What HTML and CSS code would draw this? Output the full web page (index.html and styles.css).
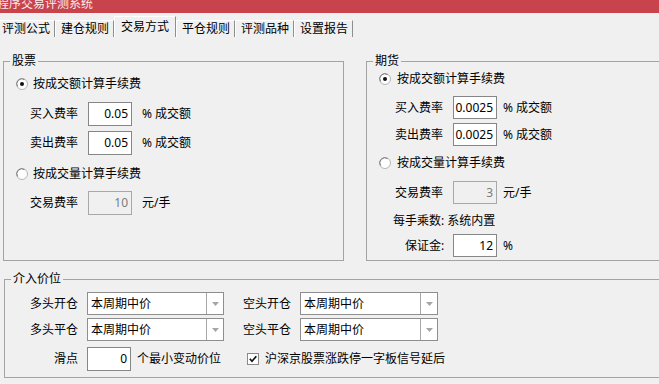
FILE: index.html
```html
<!DOCTYPE html>
<html lang="zh-CN">
<head>
<meta charset="utf-8">
<title>程序交易评测系统</title>
<link rel="stylesheet" href="styles.css">
</head>
<body>
<div class="titlebar"><span>程序交易评测系统</span></div>
<div class="tabs">
  <div class="tab">评测公式</div>
  <div class="tab">建仓规则</div>
  <div class="tab active">交易方式</div>
  <div class="tab">平仓规则</div>
  <div class="tab">评测品种</div>
  <div class="tab">设置报告</div>
</div>

<div class="panes">
  <fieldset class="group stock">
    <legend>股票</legend>
    <div class="body stock-body">
      <div class="opt">
        <svg class="radio" width="12" height="12" viewBox="0 0 12 12"><circle cx="6" cy="6" r="5.5" fill="#fff" stroke="#b4b4b4"/><path d="M1.6 8.5 A5 5 0 0 1 8.5 1.6" fill="none" stroke="#7a7a7a"/><circle cx="6" cy="6" r="2" fill="#111"/></svg>
        <span>按成交额计算手续费</span>
      </div>
      <div class="field f-s m8">
        <span class="lbl">买入费率</span>
        <div class="inp">0.05</div>
        <span class="unit u10">% 成交额</span>
      </div>
      <div class="field f-s m5">
        <span class="lbl">卖出费率</span>
        <div class="inp">0.05</div>
        <span class="unit u10">% 成交额</span>
      </div>
      <div class="opt m9">
        <svg class="radio" width="12" height="12" viewBox="0 0 12 12"><circle cx="6" cy="6" r="5.5" fill="#fff" stroke="#b4b4b4"/><path d="M1.6 8.5 A5 5 0 0 1 8.5 1.6" fill="none" stroke="#7a7a7a"/></svg>
        <span>按成交量计算手续费</span>
      </div>
      <div class="field f-s m7">
        <span class="lbl">交易费率</span>
        <div class="inp disabled">10</div>
        <span class="unit u10">元/手</span>
      </div>
    </div>
  </fieldset>

  <fieldset class="group futures">
    <legend>期货</legend>
    <div class="body fut-body">
      <div class="opt wide">
        <svg class="radio" width="12" height="12" viewBox="0 0 12 12"><circle cx="6" cy="6" r="5.5" fill="#fff" stroke="#b4b4b4"/><path d="M1.6 8.5 A5 5 0 0 1 8.5 1.6" fill="none" stroke="#7a7a7a"/><circle cx="6" cy="6" r="2" fill="#111"/></svg>
        <span>按成交额计算手续费</span>
      </div>
      <div class="field f-f m7">
        <span class="lbl">买入费率</span>
        <div class="inp">0.0025</div>
        <span class="unit u6">% 成交额</span>
      </div>
      <div class="field f-f m4">
        <span class="lbl">卖出费率</span>
        <div class="inp">0.0025</div>
        <span class="unit u6">% 成交额</span>
      </div>
      <div class="opt wide m7">
        <svg class="radio" width="12" height="12" viewBox="0 0 12 12"><circle cx="6" cy="6" r="5.5" fill="#fff" stroke="#b4b4b4"/><path d="M1.6 8.5 A5 5 0 0 1 8.5 1.6" fill="none" stroke="#7a7a7a"/></svg>
        <span>按成交量计算手续费</span>
      </div>
      <div class="field f-f m8">
        <span class="lbl">交易费率</span>
        <div class="inp disabled">3</div>
        <span class="unit u6">元/手</span>
      </div>
      <div class="info m9">每手乘数: 系统内置</div>
      <div class="field f-f m5">
        <span class="lbl indent">保证金:</span>
        <div class="inp">12</div>
        <span class="unit u6">%</span>
      </div>
    </div>
  </fieldset>
</div>

<fieldset class="group price">
  <legend>介入价位</legend>
  <div class="body price-body">
    <div class="prow m5">
      <span class="plbl">多头开仓</span>
      <div class="select s1"><span class="val">本周期中价</span><span class="btn"><svg width="7" height="4" viewBox="0 0 7 4"><polygon points="0,0 7,0 3.5,4" fill="#a6a6a6"/></svg></span></div>
      <span class="plbl2">空头开仓</span>
      <div class="select s2"><span class="val">本周期中价</span><span class="btn"><svg width="7" height="4" viewBox="0 0 7 4"><polygon points="0,0 7,0 3.5,4" fill="#a6a6a6"/></svg></span></div>
    </div>
    <div class="prow m3">
      <span class="plbl">多头平仓</span>
      <div class="select s1"><span class="val">本周期中价</span><span class="btn"><svg width="7" height="4" viewBox="0 0 7 4"><polygon points="0,0 7,0 3.5,4" fill="#a6a6a6"/></svg></span></div>
      <span class="plbl2">空头平仓</span>
      <div class="select s2"><span class="val">本周期中价</span><span class="btn"><svg width="7" height="4" viewBox="0 0 7 4"><polygon points="0,0 7,0 3.5,4" fill="#a6a6a6"/></svg></span></div>
    </div>
    <div class="prow tall m6">
      <span class="plbl">滑点</span>
      <div class="inp">0</div>
      <span class="unit u6">个最小变动价位</span>
      <svg class="check" width="12" height="12" viewBox="0 0 12 12"><rect x="0.5" y="0.5" width="11" height="11" fill="#fff" stroke="#8a8a8a"/><path d="M2.8 5.8 L5 8.3 L9.3 3.2" fill="none" stroke="#111" stroke-width="1.7"/></svg>
      <span class="chk-lbl">沪深京股票涨跌停一字板信号延后</span>
    </div>
  </div>
</fieldset>
</body>
</html>
```

FILE: styles.css
```css
html, body {
  margin: 0;
  padding: 0;
}
body {
  width: 659px;
  height: 384px;
  overflow: hidden;
  background: #f0f0f0;
  color: #000;
  font-family: "Noto Sans", "Noto Sans CJK SC", sans-serif;
  font-size: 12px;
  line-height: 16px;
}

.titlebar {
  height: 13px;
  background: #c8434b;
  color: #fbeaea;
  overflow: hidden;
}
.titlebar span {
  display: block;
  margin: -4px 0 0 -3px;
  line-height: 16px;
  white-space: nowrap;
}

.tabs {
  display: flex;
  align-items: flex-end;
  height: 24px;
  margin-left: -4px;
}
.tab {
  height: 16px;
  line-height: 16px;
  padding: 0 4px 0 5px;
  border-top: 1px solid #ffffff;
  border-left: 1px solid #ffffff;
  border-right: 1px solid #8e8e8e;
  white-space: nowrap;
}
.tab.active {
  height: 20px;
  line-height: 20px;
  padding: 0 6px;
}

.panes {
  display: flex;
  margin-top: 16px;
}

.group {
  margin: 0;
  padding: 0;
  border: 1px solid #a3a3a3;
  min-width: 0;
  box-sizing: border-box;
}
.group legend {
  margin-left: 6px;
  padding: 0 2px;
  line-height: 16px;
}

.stock {
  flex: none;
  margin-left: 3px;
  width: 341px;
  height: 208px;
}
.futures {
  flex: none;
  margin-left: 22px;
  width: 294px;
  height: 208px;
}
.price {
  margin-top: 10px;
  margin-left: 4px;
  width: 656px;
  height: 107px;
}

.stock-body { padding-top: 5px; }
.fut-body { padding-top: 0; }

.opt {
  display: flex;
  align-items: center;
  height: 20px;
  padding-left: 12px;
  white-space: nowrap;
}
.opt .radio { flex: none; margin-right: 5px; }
.opt.wide .radio { margin-right: 6px; }

.field {
  display: flex;
  align-items: center;
  white-space: nowrap;
}
.f-s { height: 24px; padding-left: 26px; }
.f-f { height: 23px; padding-left: 28px; }
.lbl {
  width: 48px;
  margin-right: 10px;
  flex: none;
}
.lbl.indent { padding-left: 10px; box-sizing: border-box; }

.inp {
  box-sizing: border-box;
  width: 44px;
  height: 100%;
  flex: none;
  background: #fff;
  border: 1px solid #868686;
  padding-right: 3px;
  display: flex;
  align-items: center;
  justify-content: flex-end;
}
.inp.disabled {
  background: #f0f0f0;
  border-color: #a8a8a8;
  color: #7c7c7c;
}
.unit { flex: none; }
.u10 { margin-left: 10px; }
.u6 { margin-left: 6px; }

.info {
  height: 16px;
  line-height: 16px;
  padding-left: 26px;
  white-space: nowrap;
}

.m3 { margin-top: 3px; }
.m4 { margin-top: 4px; }
.m5 { margin-top: 5px; }
.m6 { margin-top: 6px; }
.m7 { margin-top: 7px; }
.m8 { margin-top: 8px; }
.m9 { margin-top: 9px; }

.prow {
  display: flex;
  align-items: center;
  height: 23px;
  white-space: nowrap;
}
.prow.tall { height: 24px; }
.plbl {
  width: 73px;
  text-align: right;
  margin-right: 9px;
  flex: none;
}
.plbl2 {
  width: 48px;
  margin-left: 19px;
  margin-right: 9px;
  flex: none;
}
.select {
  box-sizing: border-box;
  height: 23px;
  background: #fff;
  border: 1px solid #8e8e8e;
  display: flex;
  flex: none;
}
.s1 { width: 137px; }
.s2 { width: 138px; }
.select .val {
  flex: 1;
  padding-left: 3px;
  line-height: 21px;
}
.select .btn {
  box-sizing: border-box;
  width: 17px;
  border-left: 1px solid #a8a8a8;
  display: flex;
  align-items: center;
  justify-content: center;
}
.check {
  flex: none;
  margin-left: 26px;
}
.chk-lbl { margin-left: 6px; }
```
